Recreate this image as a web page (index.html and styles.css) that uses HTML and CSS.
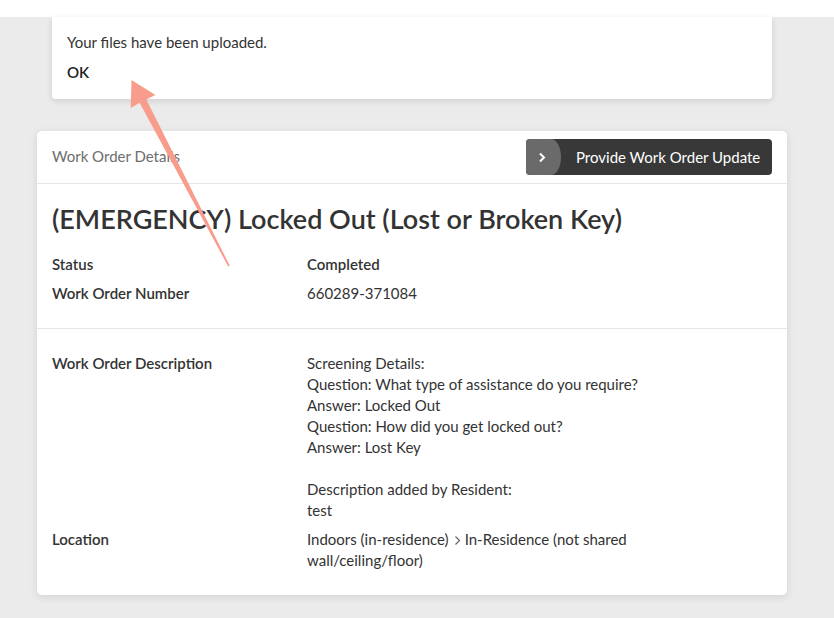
FILE: index.html
```html
<!DOCTYPE html>
<html lang="en">
<head>
<meta charset="utf-8">
<title>Work Order Details</title>
<link rel="stylesheet" href="styles.css">
</head>
<body>
<div class="topbar"></div>
<div class="toast">
  <p class="toast-msg">Your files have been uploaded.</p>
  <p class="toast-ok">OK</p>
</div>
<div class="card">
  <div class="card-header">
    <span class="card-title">Work Order Details</span>
    <button class="update-btn">
      <span class="btn-icon"><svg width="8" height="11" viewBox="0 0 8 11"><path d="M2 1.5 L6 5.5 L2 9.5" fill="none" stroke="#fff" stroke-width="2"/></svg></span>
      <span class="btn-label">Provide Work Order Update</span>
    </button>
  </div>
  <div class="section">
    <h1 class="wo-title">(EMERGENCY) Locked Out (Lost or Broken Key)</h1>
    <div class="row"><div class="label">Status</div><div class="value strong">Completed</div></div>
    <div class="row"><div class="label">Work Order Number</div><div class="value">660289-371084</div></div>
  </div>
  <div class="section section-2">
    <div class="row">
      <div class="label">Work Order Description</div>
      <div class="value">Screening Details:<br>Question: What type of assistance do you require?<br>Answer: Locked Out<br>Question: How did you get locked out?<br>Answer: Lost Key<br><br>Description added by Resident:<br>test</div>
    </div>
    <div class="row">
      <div class="label">Location</div>
      <div class="value">Indoors (in-residence)<svg class="crumb" width="7" height="11" viewBox="0 0 7 11"><path d="M1.5 1.5 L5.5 5.5 L1.5 9.5" fill="none" stroke="#666" stroke-width="1.2"/></svg>In-Residence (not shared wall/ceiling/floor)</div>
    </div>
  </div>
</div>
<svg class="arrow" width="834" height="618" viewBox="0 0 834 618">
  <polygon points="131.5,80 155.5,95 146.3,99.6 229.8,265.8 228.2,266.4 139.6,102.8 130.7,108" fill="#f89d8b"/>
</svg>
</body>
</html>
```
FILE: styles.css
```css
html, body {
  margin: 0;
  padding: 0;
}
body {
  background: #ebebeb;
  font-family: "Segoe UI", Lato, "Noto Sans", sans-serif;
  font-size: 15px;
  line-height: 21px;
  color: #333;
  position: relative;
  width: 834px;
  height: 618px;
  overflow: hidden;
}
.topbar {
  height: 17px;
  background: #fff;
}
.toast {
  width: 690px;
  margin-left: 52px;
  padding: 15px 15px 15.5px;
  background: #fff;
  border-radius: 0 0 4px 4px;
  box-shadow: 0 2px 6px rgba(0, 0, 0, 0.12);
}
.toast p {
  margin: 0;
}
.toast-msg {
  color: #333;
}
.toast-ok {
  margin-top: 9px !important;
  font-weight: 600;
  color: #222;
}
.card {
  width: 750px;
  margin: 32px 0 0 37px;
  background: #fff;
  border-radius: 5px;
  box-shadow: 0 2px 8px rgba(0, 0, 0, 0.1);
}
.card-header {
  height: 52px;
  padding: 0 15px;
  border-bottom: 1px solid #e6e6e6;
  display: flex;
  align-items: center;
  justify-content: space-between;
}
.card-title {
  color: #6d6d6d;
  font-size: 15px;
}
.update-btn {
  height: 36px;
  width: 246px;
  padding: 0;
  border: 0;
  border-radius: 4px;
  background: #383838;
  color: #fff;
  font: inherit;
  display: flex;
  align-items: center;
  margin-top: 1px;
}
.btn-icon {
  width: 35px;
  height: 36px;
  background: #6a6a6a;
  border-radius: 4px 10px 10px 4px / 4px 18px 18px 4px;
  display: flex;
  align-items: center;
  justify-content: center;
  padding-right: 3px;
  box-sizing: border-box;
}
.btn-label {
  margin-left: 15px;
  font-size: 15px;
}
.section {
  padding: 18px 15px 24px;
}
.section + .section {
  border-top: 1px solid #e6e6e6;
}
.section-2 {
  padding-top: 24px;
}
.wo-title {
  margin: 0 0 18px;
  font-size: 27px;
  line-height: 34px;
  font-weight: 600;
  color: #333;
}
.row {
  display: grid;
  grid-template-columns: 255px 360px;
}
.row + .row {
  margin-top: 8px;
}
.label {
  font-weight: 600;
  color: #333;
}
.value.strong {
  font-weight: 600;
}
.crumb {
  vertical-align: -1px;
  margin: 0 4px 0 5px;
}
.arrow {
  position: absolute;
  left: 0;
  top: 0;
  pointer-events: none;
}
```
